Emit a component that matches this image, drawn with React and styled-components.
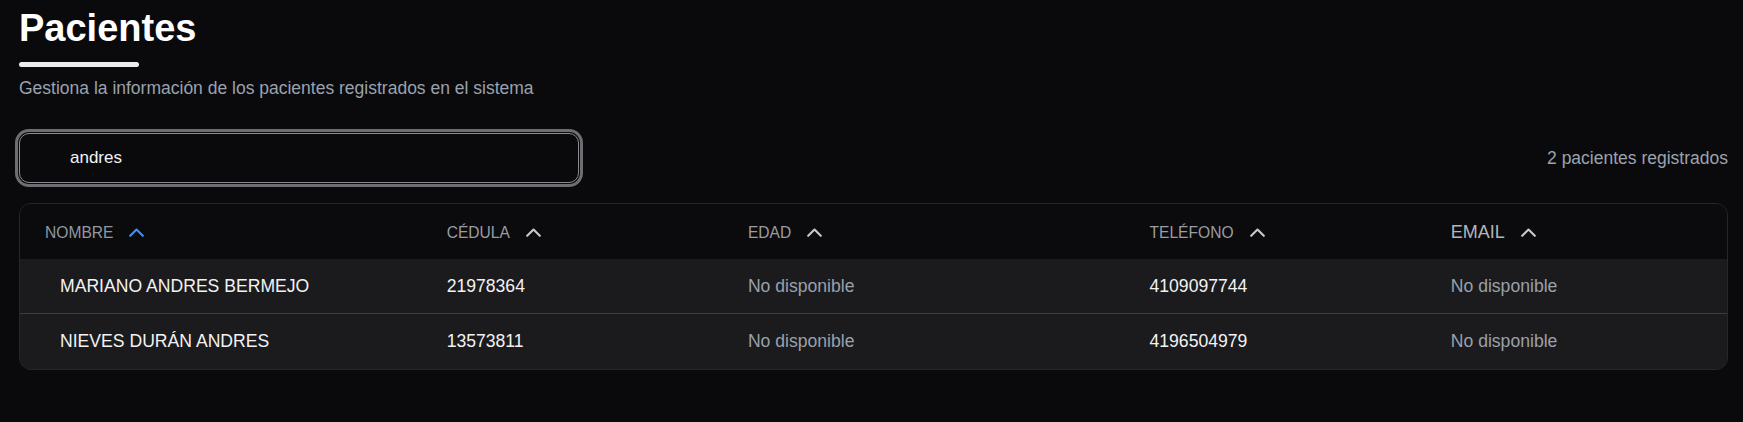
import React from "react";
import styled, { createGlobalStyle } from "styled-components";

const GlobalStyle = createGlobalStyle`
  html, body {
    margin: 0;
    padding: 0;
    background: #0a0a0d;
  }
  body {
    font-family: "Liberation Sans", Arial, sans-serif;
    color: #f2f2f2;
  }
  * { box-sizing: border-box; }
`;

const Page = styled.main`
  min-height: 100vh;
  padding: 6px 15px 0 19px;
  background: #0a0a0d;
`;

const Title = styled.h1`
  margin: 0;
  font-size: 38px;
  line-height: 1.2;
  font-weight: 700;
  color: #ffffff;
`;

const TitleBar = styled.div`
  width: 120px;
  height: 5px;
  margin-top: 10px;
  border-radius: 3px;
  background: #ececec;
`;

const Subtitle = styled.p`
  margin: 8px 0 0;
  font-size: 17.5px;
  line-height: 1.5;
  color: #9aa2ad;
`;

const Toolbar = styled.div`
  display: flex;
  align-items: center;
  justify-content: space-between;
  margin-top: 32px;
`;

const SearchInput = styled.input`
  width: 560px;
  height: 50px;
  padding: 1px 16px 0 50px;
  border: 1px solid #8a8a90;
  border-radius: 10px;
  background: #0a0a0d;
  color: #f4f4f6;
  font-family: "Liberation Sans", Arial, sans-serif;
  font-size: 17px;
  outline: none;
  box-shadow: 0 0 0 1px #0a0a0d, 0 0 0 4px #6d6d72;
`;

const Count = styled.span`
  padding-top: 2px;
  font-size: 17.5px;
  color: #9ca3ad;
`;

const Table = styled.section`
  margin-top: 20px;
  border: 1px solid #26262b;
  border-radius: 12px;
  overflow: hidden;
  background: #1b1b1e;
`;

const Row = styled.div`
  display: grid;
  grid-template-columns: 4fr 3fr 4fr 3fr 3fr;
  align-items: center;
  height: 55px;
  padding-top: 1px;
  background: ${(p) => (p.$head ? "#0b0b0e" : "#1b1b1e")};
  border-bottom: ${(p) => (p.$divider ? "1px solid #3a3d46" : "none")};
`;

const HeadCell = styled.div`
  display: flex;
  align-items: center;
  gap: 16px;
  padding-left: 25px;
  padding-top: 2px;
  font-size: ${(p) => (p.$large ? "18px" : "15.6px")};
  color: ${(p) => p.$color || "#9a9ca1"};
  text-transform: uppercase;
`;

const Cell = styled.div`
  padding-left: ${(p) => (p.$name ? "40px" : "25px")};
  font-size: 17.6px;
  color: ${(p) => (p.$muted ? "#9aa0aa" : "#f2f2f4")};
  white-space: nowrap;
`;

const Chevron = ({ active }) => (
  <svg width="15" height="9" viewBox="0 0 15 9" fill="none" aria-hidden="true">
    <path
      d="M1.2 7.8 L7.5 1.5 L13.8 7.8"
      stroke={active ? "#4a8fe3" : "#c9c9cc"}
      strokeWidth="2.1"
      strokeLinecap="round"
      strokeLinejoin="round"
    />
  </svg>
);

const columns = [
  { label: "Nombre", active: true, color: "#8f98a3" },
  { label: "Cédula" },
  { label: "Edad" },
  { label: "Teléfono" },
  { label: "Email", large: true, color: "#b3b5ba" },
];

const patients = [
  { name: "MARIANO ANDRES BERMEJO", id: "21978364", age: null, phone: "4109097744", email: null },
  { name: "NIEVES DURÁN ANDRES", id: "13573811", age: null, phone: "4196504979", email: null },
];

export default function App() {
  return (
    <>
      <GlobalStyle />
      <Page>
        <Title>Pacientes</Title>
        <TitleBar />
        <Subtitle>Gestiona la información de los pacientes registrados en el sistema</Subtitle>
        <Toolbar>
          <SearchInput type="text" defaultValue="andres" spellCheck={false} />
          <Count>2 pacientes registrados</Count>
        </Toolbar>
        <Table>
          <Row $head>
            {columns.map((c) => (
              <HeadCell key={c.label} $large={c.large} $color={c.color}>
                {c.label}
                <Chevron active={c.active} />
              </HeadCell>
            ))}
          </Row>
          {patients.map((p, i) => (
            <Row key={p.id} $divider={i < patients.length - 1}>
              <Cell $name>{p.name}</Cell>
              <Cell>{p.id}</Cell>
              <Cell $muted={!p.age}>{p.age ?? "No disponible"}</Cell>
              <Cell>{p.phone}</Cell>
              <Cell $muted={!p.email}>{p.email ?? "No disponible"}</Cell>
            </Row>
          ))}
        </Table>
      </Page>
    </>
  );
}
